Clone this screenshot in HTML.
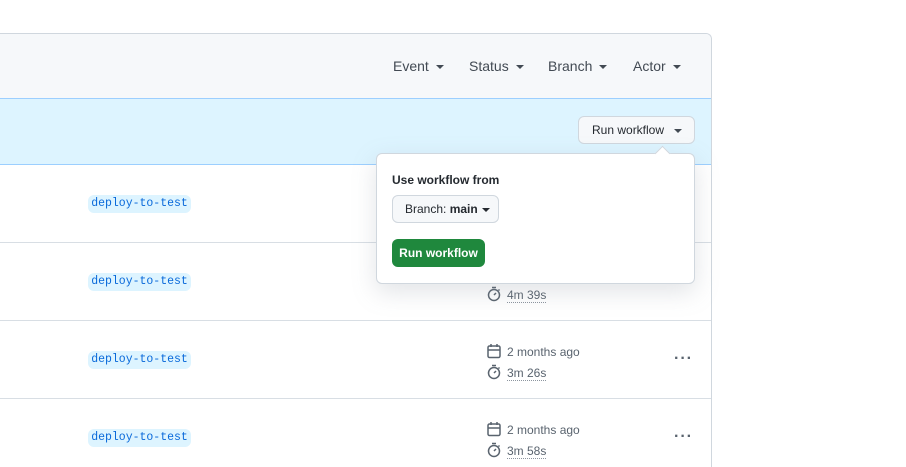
<!DOCTYPE html>
<html style="height:467px;overflow:hidden"><head><style>
body{margin:0;width:906px;height:467px;background:#fff;font-family:"Liberation Sans",sans-serif;overflow:hidden;position:relative;color:#1f2328}
.box{position:absolute;left:-10px;top:33px;width:720px;height:434px;border:1px solid #d0d7de;border-bottom:none;border-radius:6px 6px 0 0;overflow:hidden}
.hdr{position:absolute;left:0;top:0;width:100%;height:64px;background:#f6f8fa;border-bottom:1px solid #d0d7de}
.band{position:absolute;left:0;top:64px;width:100%;height:65px;background:#ddf4ff;border-bottom:1px solid #9ccfff;border-top:1px solid #9ccfff}
.row{position:absolute;left:0;width:711px;height:0;border-bottom:1px solid #d8dee4}
.flt{position:absolute;top:58px;font-size:14px;color:#424a53}
.car{display:inline-block;width:0;height:0;border-left:4px solid transparent;border-right:4px solid transparent;border-top:4px solid #424a53;vertical-align:middle;margin-left:7px}
.pill{position:absolute;left:88px;height:18px;width:103px;background:#ddf4ff;border-radius:6px;font-family:"Liberation Mono",monospace;font-size:11.5px;color:#0969da;text-align:center;line-height:18px}
.t{position:absolute;left:507px;font-size:12px;color:#59636e}
.u{border-bottom:1px dotted #8c959f}
.dots{position:absolute;left:674px;font-size:16px;color:#59636e;letter-spacing:1px;font-weight:bold}
svg.i{position:absolute;left:486px}
</style></head><body>
<div class="box">
<div class="hdr"></div>
<div class="band"></div>
</div>
<div class="row" style="top:242px"></div>
<div class="row" style="top:320px"></div>
<div class="row" style="top:398px"></div>
<div class="flt" style="left:393px">Event<span class="car"></span></div>
<div class="flt" style="left:469px">Status<span class="car"></span></div>
<div class="flt" style="left:548px">Branch<span class="car"></span></div>
<div class="flt" style="left:633px">Actor<span class="car"></span></div>

<div class="pill" style="top:195px">deploy-to-test</div>
<div class="pill" style="top:273px">deploy-to-test</div>
<div class="pill" style="top:351px">deploy-to-test</div>
<div class="pill" style="top:429px">deploy-to-test</div>

<svg class="i" style="top:286px" width="16" height="16" viewBox="0 0 16 16"><circle cx="8" cy="9" r="5.5" fill="none" stroke="#59636e" stroke-width="1.5"/><path d="M6 1.5h4M8 9l2-2M12.5 3.5l1 1" stroke="#59636e" stroke-width="1.5" fill="none"/></svg>
<div class="t" style="top:288px"><span class="u">4m 39s</span></div>

<svg class="i" style="top:343px" width="16" height="16" viewBox="0 0 16 16"><rect x="2" y="3" width="12" height="11.5" rx="1.5" fill="none" stroke="#59636e" stroke-width="1.5"/><path d="M2 7h12M5 1v3M11 1v3" stroke="#59636e" stroke-width="1.5"/></svg>
<div class="t" style="top:345px">2 months ago</div>
<svg class="i" style="top:364px" width="16" height="16" viewBox="0 0 16 16"><circle cx="8" cy="9" r="5.5" fill="none" stroke="#59636e" stroke-width="1.5"/><path d="M6 1.5h4M8 9l2-2M12.5 3.5l1 1" stroke="#59636e" stroke-width="1.5" fill="none"/></svg>
<div class="t" style="top:366px"><span class="u">3m 26s</span></div>
<div class="dots" style="top:350px">···</div>

<svg class="i" style="top:421px" width="16" height="16" viewBox="0 0 16 16"><rect x="2" y="3" width="12" height="11.5" rx="1.5" fill="none" stroke="#59636e" stroke-width="1.5"/><path d="M2 7h12M5 1v3M11 1v3" stroke="#59636e" stroke-width="1.5"/></svg>
<div class="t" style="top:423px">2 months ago</div>
<svg class="i" style="top:442px" width="16" height="16" viewBox="0 0 16 16"><circle cx="8" cy="9" r="5.5" fill="none" stroke="#59636e" stroke-width="1.5"/><path d="M6 1.5h4M8 9l2-2M12.5 3.5l1 1" stroke="#59636e" stroke-width="1.5" fill="none"/></svg>
<div class="t" style="top:444px"><span class="u">3m 58s</span></div>
<div class="dots" style="top:428px">···</div>

<div style="position:absolute;left:578px;top:116px;width:115px;height:26px;background:#f6f8fa;border:1px solid #d0d7de;border-radius:6px;font-size:12px;line-height:26px;text-indent:13px;color:#24292f">Run workflow<span class="car" style="margin-left:10px"></span></div>

<div style="position:absolute;left:376px;top:153px;width:317px;height:129px;background:#fff;border:1px solid #d0d7de;border-radius:6px;box-shadow:0 8px 24px rgba(140,149,159,.25)">
<div style="position:absolute;left:280px;top:-6px;width:10px;height:10px;background:#fff;border-left:1px solid #d0d7de;border-top:1px solid #d0d7de;transform:rotate(45deg)"></div>
<div style="position:absolute;left:15px;top:19px;font-size:12px;color:#24292f;font-weight:600">Use workflow from</div>
<div style="position:absolute;left:15px;top:41px;width:105px;height:26px;background:#f6f8fa;border:1px solid #d0d7de;border-radius:6px;font-size:12px;line-height:26px;text-indent:12px;color:#24292f">Branch: <b>main</b><span class="car" style="margin-left:4px;border-top-color:#24292f"></span></div>
<div style="position:absolute;left:15px;top:85px;width:93px;height:28px;background:#1f883d;border-radius:6px;font-size:12px;font-weight:bold;color:#fff;line-height:28px;text-align:center">Run workflow</div>
</div>
</body></html>
